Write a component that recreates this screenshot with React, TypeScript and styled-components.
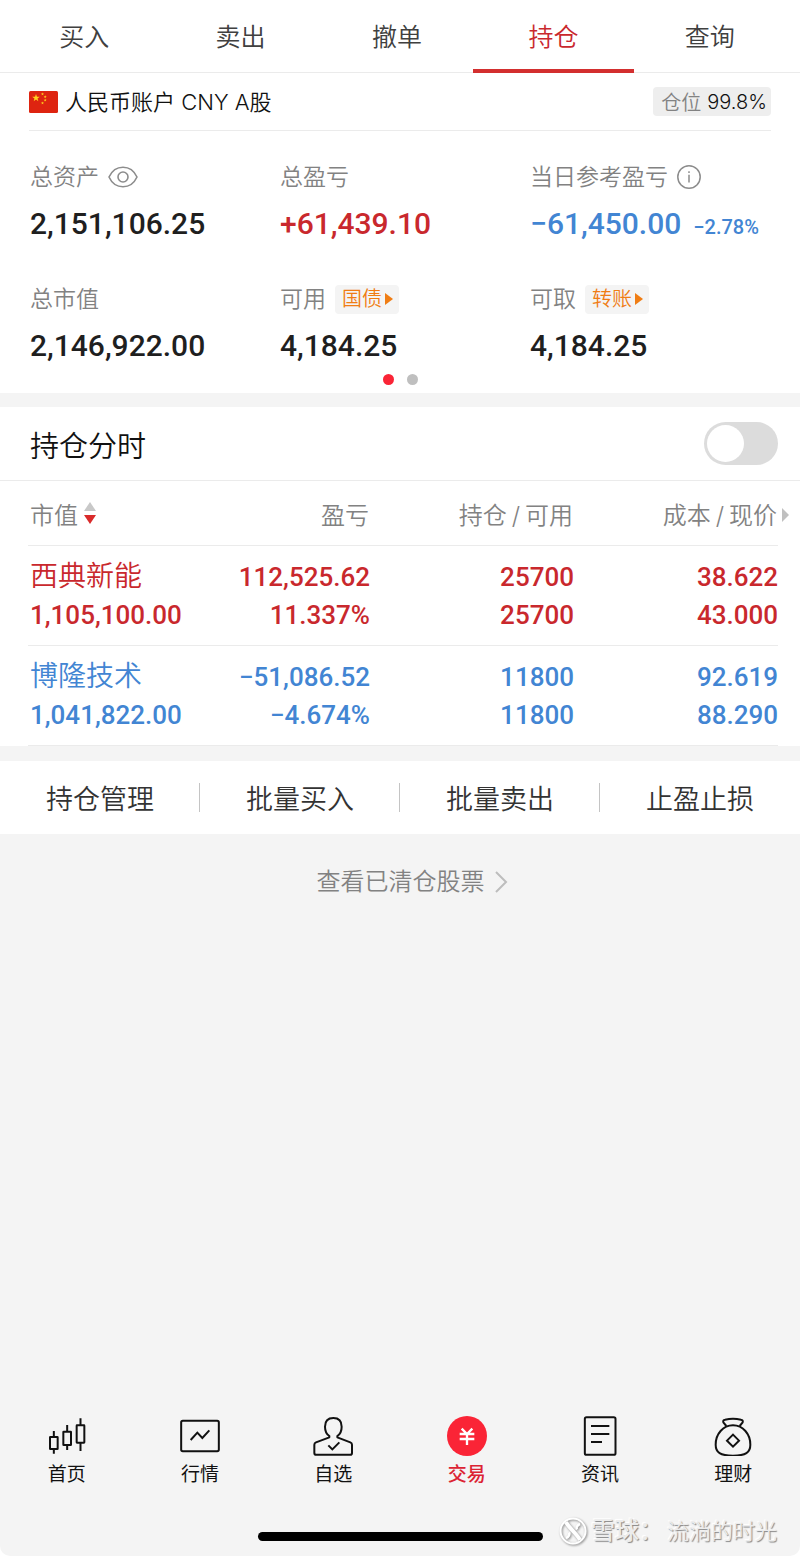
import React from "react";
import styled, { createGlobalStyle, css } from "styled-components";

const c = {
  red: "#c9282d",
  bar: "#d32f2f",
  blue: "#4285d3",
  orange: "#f07d14",
  ink: "#1f1f1f",
  text: "#404040",
  muted: "#828282",
  line: "#ebebeb",
  page: "#f4f4f4",
};

const GlobalStyle = createGlobalStyle`
  *, *::before, *::after { box-sizing: border-box; }
  body {
    margin: 0;
    background: #fff;
    color: ${c.ink};
    font-family: Inter, "Noto Sans CJK SC", sans-serif;
    font-weight: 350;
  }
  button {
    border: 0;
    padding: 0;
    background: none;
    color: inherit;
    font: inherit;
    cursor: pointer;
  }
  a { color: inherit; text-decoration: none; }
`;

type Tone = "ink" | "red" | "blue";

const Screen = styled.div`
  display: flex;
  flex-direction: column;
  min-height: 100vh;
  background: ${c.page};
  border-radius: 0 0 10px 10px;
`;

const Tabs = styled.nav`
  display: flex;
  height: 73px;
  padding: 0 12px 0 6px;
  background: #fff;
  border-bottom: 1px solid ${c.line};
`;

const Tab = styled.button<{ $active?: boolean }>`
  position: relative;
  flex: 1;
  padding-top: 2px;
  font-size: 25px;
  line-height: 70px;
  color: ${(p) => (p.$active ? c.red : c.text)};
  ${(p) =>
    p.$active &&
    css`
      &::after {
        content: "";
        position: absolute;
        left: -2px;
        right: -2px;
        bottom: -1px;
        height: 4px;
        background: ${c.bar};
      }
    `}
`;

const Account = styled.section`
  padding: 0 29px;
  background: #fff;
`;

const AccountRow = styled.div`
  display: flex;
  align-items: center;
  justify-content: space-between;
  height: 58px;
  border-bottom: 1px solid ${c.line};
`;

const AccountName = styled.div`
  display: flex;
  align-items: center;
  gap: 7px;
  font-size: 22px;
  line-height: 30px;
  color: #111;
`;

const Position = styled.div`
  display: flex;
  align-items: center;
  gap: 6px;
  height: 29px;
  padding: 0 4px 0 8px;
  border-radius: 4px;
  background: #eeeeee;
  font-size: 20px;
  color: ${c.muted};
`;

const PositionValue = styled.span`
  color: #111;
`;

const Summary = styled.section`
  padding: 31px 20px 8px 30px;
  background: #fff;
`;

const Figures = styled.div`
  display: grid;
  grid-template-columns: repeat(3, 1fr);
  row-gap: 42px;
`;

const Figure = styled.div`
  display: flex;
  flex-direction: column;
  gap: 14px;
`;

const Label = styled.div`
  display: flex;
  align-items: center;
  gap: 9px;
  height: 30px;
  font-size: 23px;
  line-height: 30px;
  white-space: nowrap;
  color: ${c.muted};
`;

const Value = styled.div<{ $tone?: Tone }>`
  display: flex;
  align-items: baseline;
  gap: 12px;
  height: 36px;
  font: 500 30px/36px Roboto, "Noto Sans CJK SC", sans-serif;
  white-space: nowrap;
  color: ${(p) => c[p.$tone ?? "ink"]};
`;

const Rate = styled.span`
  font-size: 20px;
  line-height: 24px;
`;

const Tag = styled.button`
  display: flex;
  align-items: center;
  gap: 3px;
  height: 29px;
  padding: 0 6px 0 7px;
  border-radius: 4px;
  background: ${c.page};
  font-size: 20px;
  color: ${c.orange};
`;

const Pager = styled.div`
  display: flex;
  justify-content: center;
  gap: 13px;
  margin: 10px 10px 0 0;
`;

const Dot = styled.button<{ $on?: boolean }>`
  width: 11px;
  height: 11px;
  border-radius: 50%;
  background: ${(p) => (p.$on ? "#fa2436" : "#bfbfbf")};
`;

const Holdings = styled.section`
  margin-top: 14px;
  background: #fff;
`;

const HoldingsHead = styled.label`
  display: flex;
  align-items: center;
  justify-content: space-between;
  height: 74px;
  padding: 0 22px 0 30px;
  border-bottom: 1px solid ${c.line};
  font-size: 29px;
  color: #111;
`;

const Toggle = styled.input`
  appearance: none;
  display: flex;
  align-items: center;
  width: 74px;
  height: 43px;
  margin: 0;
  padding: 3px;
  border-radius: 22px;
  background: #dcdcdc;
  cursor: pointer;
  &::before {
    content: "";
    width: 37px;
    height: 37px;
    border-radius: 50%;
    background: #fff;
  }
  &:checked {
    justify-content: flex-end;
    background: ${c.red};
  }
`;

const TableWrap = styled.div`
  padding: 0 22px 0 28px;
`;

const Table = styled.table`
  width: 100%;
  table-layout: fixed;
  border-collapse: separate;
  border-spacing: 0;
`;

const Th = styled.th<{ $w: string }>`
  width: ${(p) => p.$w};
  height: 65px;
  padding: 0 1px 0 2px;
  border-bottom: 1px solid ${c.line};
  font-size: 24px;
  font-weight: 350;
  text-align: right;
  white-space: nowrap;
  color: ${c.muted};
  &:first-child { text-align: left; }
`;

const Slash = styled.span`
  padding: 0 5px;
`;

const SortButton = styled.button`
  display: flex;
  align-items: center;
  gap: 6px;
`;

const More = styled.span`
  position: relative;
  svg {
    position: absolute;
    left: calc(100% + 5px);
    top: 50%;
    transform: translateY(-50%);
  }
`;

const Td = styled.td<{ $tone: Tone }>`
  height: 100px;
  padding: 0 0 0 2px;
  border-bottom: 1px solid ${c.line};
  font: 500 26px/38px Roboto, "Noto Sans CJK SC", sans-serif;
  text-align: right;
  white-space: nowrap;
  color: ${(p) => c[p.$tone]};
  &:first-child { text-align: left; }
`;

const Line = styled.div`
  height: 38px;
`;

const StockName = styled.div`
  height: 38px;
  font-size: 28px;
  font-weight: 350;
`;

const Actions = styled.div`
  display: flex;
  height: 73px;
  margin-top: 15px;
  background: #fff;
`;

const Action = styled.button`
  display: flex;
  align-items: center;
  justify-content: center;
  flex: 1;
  position: relative;
  font-size: 27px;
  color: #333;
  & + &::before {
    content: "";
    position: absolute;
    left: -1px;
    width: 1px;
    height: 29px;
    background: #c4c4c4;
  }
`;

const Cleared = styled.a`
  display: flex;
  align-items: center;
  align-self: center;
  gap: 9px;
  margin: 30px 0 auto 24px;
  font-size: 24px;
  line-height: 36px;
  color: ${c.muted};
`;

const BottomNav = styled.nav`
  display: flex;
  padding-top: 24px;
`;

const NavItem = styled.a<{ $active?: boolean }>`
  display: flex;
  flex: 1;
  flex-direction: column;
  align-items: center;
  gap: 5px;
  font-size: 19px;
  line-height: 28px;
  font-weight: ${(p) => (p.$active ? 500 : 400)};
  color: ${(p) => (p.$active ? "#dc2333" : "#111")};
`;

const Footer = styled.footer`
  position: relative;
  display: flex;
  justify-content: center;
  padding: 43px 0 15px;
`;

const HomeBar = styled.div`
  width: 285px;
  height: 9px;
  border-radius: 5px;
  background: #000;
`;

const Watermark = styled.div`
  position: absolute;
  right: 23px;
  bottom: 8px;
  display: flex;
  align-items: center;
  gap: 4px;
  font-size: 22px;
  line-height: 34px;
  color: #ececec;
  text-shadow: 1px 1px 1px #858585, -1px -1px 1px #fff;
  white-space: nowrap;
  svg { filter: drop-shadow(1px 1px 1px #858585); }
`;

const Brand = styled.span`
  font-size: 24px;
  font-weight: 500;
`;

const starPoints = (cx: number, cy: number, r: number) =>
  Array.from({ length: 10 }, (_, i) => {
    const a = -Math.PI / 2 + (i * Math.PI) / 5;
    const k = i % 2 ? r * 0.4 : r;
    return `${(cx + k * Math.cos(a)).toFixed(2)},${(cy + k * Math.sin(a)).toFixed(2)}`;
  }).join(" ");

const Flag = () => (
  <svg width="29" height="22" viewBox="0 0 29 22" aria-hidden="true">
    <rect width="29" height="22" rx="1.5" fill="#de2410" />
    <g fill="#ffd21c">
      <polygon points={starPoints(7, 7, 4)} />
      <polygon points={starPoints(13.5, 3, 1.6)} />
      <polygon points={starPoints(16.2, 5.8, 1.6)} />
      <polygon points={starPoints(16.2, 9.2, 1.6)} />
      <polygon points={starPoints(13.5, 12, 1.6)} />
    </g>
  </svg>
);

const Eye = () => (
  <svg width="30" height="22" viewBox="0 0 30 22" fill="none" stroke="#8c8c8c" strokeWidth="1.6" aria-hidden="true">
    <path d="M1 11C4 4.500 9 1.200 15 1.200S26 4.500 29 11C26 17.500 21 20.800 15 20.800S4 17.500 1 11Z" />
    <circle cx="15" cy="11" r="5" />
  </svg>
);

const Info = () => (
  <svg width="24" height="24" viewBox="0 0 24 24" fill="none" stroke="#8c8c8c" strokeWidth="1.5" aria-hidden="true">
    <circle cx="12" cy="12" r="11.200" />
    <path d="M12 9.800V17.500M12 6.300V8" strokeWidth="1.5" />
  </svg>
);

const Triangle = ({ w, h, color }: { w: number; h: number; color: string }) => (
  <svg width={w} height={h} viewBox="0 0 8 14" preserveAspectRatio="none" fill={color} aria-hidden="true">
    <path d="M0 0L8 7L0 14Z" />
  </svg>
);

const SortArrows = () => (
  <svg width="12" height="24" viewBox="0 0 12 24" aria-hidden="true">
    <path d="M6 1L12 10H0Z" fill="#c8c8c8" />
    <path d="M0 14H12L6 23Z" fill="#d92b2b" />
  </svg>
);

const Chevron = () => (
  <svg width="14" height="24" viewBox="0 0 14 24" fill="none" stroke="#bdbdbd" strokeWidth="2" aria-hidden="true">
    <path d="M2 2L12 12L2 22" />
  </svg>
);

const Icon = ({ children }: { children: React.ReactNode }) => (
  <svg width="40" height="40" viewBox="0 0 120 120" fill="none" stroke="#111" strokeWidth="6" aria-hidden="true">
    {children}
  </svg>
);

const navItems = [
  {
    name: "首页",
    icon: (
      <Icon>
        <rect x="9" y="63" width="23" height="36" rx="1" />
        <rect x="49" y="47" width="23" height="40" rx="1" />
        <rect x="89" y="28" width="23" height="52" rx="1" />
        <path d="M20.500 45V63M20.500 99V113M60.500 27V47M60.500 87V102M100.500 7V28M100.500 80V105" />
      </Icon>
    ),
  },
  {
    name: "行情",
    icon: (
      <Icon>
        <rect x="3.500" y="14.500" width="113" height="91" rx="5" />
        <path d="M32 72L52 50L67 66L88 43" />
      </Icon>
    ),
  },
  {
    name: "自选",
    icon: (
      <Icon>
        <path d="M49 60C40 54 36 44 36 32C36 15 46 6 61 6S86 15 86 32C86 44 82 54 73 60V64L112 79Q117 81 117 86V111Q117 116.500 112 116.500H9Q4 116.500 4 111V86Q4 81 9 79L49 64Z" strokeLinejoin="round" />
        <path d="M46 88L58 100L79 79" />
      </Icon>
    ),
  },
  {
    name: "交易",
    active: true,
    icon: (
      <Icon>
        <circle cx="60" cy="60" r="60" fill="#fa2436" stroke="none" />
        <path d="M44 38L60 54L76 38M38 54H82M38 69H82M60 52V87" stroke="#fff" strokeWidth="7" />
      </Icon>
    ),
  },
  {
    name: "资讯",
    icon: (
      <Icon>
        <rect x="14.500" y="3.500" width="92" height="113" rx="5" />
        <path d="M33 30H88M33 54H88M33 78H66" />
      </Icon>
    ),
  },
  {
    name: "理财",
    icon: (
      <Icon>
        <path d="M40 30L31 19Q29 12 36 11Q60 6 84 11Q91 12 89 19L80 30" strokeLinejoin="round" />
        <path d="M60 28C30 28 8 54 8 86C8 110 22 119 60 119S112 110 112 86C112 54 90 28 60 28Z" />
        <path d="M60 56L78 74L60 92L42 74Z" />
      </Icon>
    ),
  },
];

const stocks: { name: string; value: string; profit: string; rate: string; held: string; usable: string; cost: string; price: string; tone: Tone }[] = [
  { name: "西典新能", value: "1,105,100.00", profit: "112,525.62", rate: "11.337%", held: "25700", usable: "25700", cost: "38.622", price: "43.000", tone: "red" },
  { name: "博隆技术", value: "1,041,822.00", profit: "−51,086.52", rate: "−4.674%", held: "11800", usable: "11800", cost: "92.619", price: "88.290", tone: "blue" },
];

const Pair = ({ tone, top, bottom }: { tone: Tone; top: string; bottom: string }) => (
  <Td $tone={tone}>
    <Line>{top}</Line>
    <Line>{bottom}</Line>
  </Td>
);

export default function App() {
  return (
    <Screen>
      <GlobalStyle />
      <Tabs>
        {["买入", "卖出", "撤单", "持仓", "查询"].map((t) => (
          <Tab key={t} $active={t === "持仓"}>{t}</Tab>
        ))}
      </Tabs>

      <Account>
        <AccountRow>
          <AccountName>
            <Flag />
            <span>人民币账户 CNY A股</span>
          </AccountName>
          <Position>
            仓位 <PositionValue>99.8%</PositionValue>
          </Position>
        </AccountRow>
      </Account>

      <Summary>
        <Figures>
          <Figure>
            <Label>总资产 <Eye /></Label>
            <Value>2,151,106.25</Value>
          </Figure>
          <Figure>
            <Label>总盈亏</Label>
            <Value $tone="red">+61,439.10</Value>
          </Figure>
          <Figure>
            <Label>当日参考盈亏 <Info /></Label>
            <Value $tone="blue">−61,450.00 <Rate>−2.78%</Rate></Value>
          </Figure>
          <Figure>
            <Label>总市值</Label>
            <Value>2,146,922.00</Value>
          </Figure>
          <Figure>
            <Label>可用 <Tag>国债<Triangle w={8} h={12} color={c.orange} /></Tag></Label>
            <Value>4,184.25</Value>
          </Figure>
          <Figure>
            <Label>可取 <Tag>转账<Triangle w={8} h={12} color={c.orange} /></Tag></Label>
            <Value>4,184.25</Value>
          </Figure>
        </Figures>
        <Pager>
          <Dot $on aria-label="1" />
          <Dot aria-label="2" />
        </Pager>
      </Summary>

      <Holdings>
        <HoldingsHead>
          持仓分时
          <Toggle type="checkbox" />
        </HoldingsHead>
        <TableWrap>
          <Table>
            <thead>
              <tr>
                <Th $w="21%"><SortButton>市值<SortArrows /></SortButton></Th>
                <Th $w="24.6%">盈亏</Th>
                <Th $w="27.2%">持仓<Slash>/</Slash>可用</Th>
                <Th $w="27.2%"><More>成本<Slash>/</Slash>现价<Triangle w={7} h={14} color="#c0c0c0" /></More></Th>
              </tr>
            </thead>
            <tbody>
              {stocks.map((s) => (
                <tr key={s.name}>
                  <Td $tone={s.tone}>
                    <StockName>{s.name}</StockName>
                    <Line>{s.value}</Line>
                  </Td>
                  <Pair tone={s.tone} top={s.profit} bottom={s.rate} />
                  <Pair tone={s.tone} top={s.held} bottom={s.usable} />
                  <Pair tone={s.tone} top={s.cost} bottom={s.price} />
                </tr>
              ))}
            </tbody>
          </Table>
        </TableWrap>
      </Holdings>

      <Actions>
        {["持仓管理", "批量买入", "批量卖出", "止盈止损"].map((a) => (
          <Action key={a}>{a}</Action>
        ))}
      </Actions>

      <Cleared href="#cleared">查看已清仓股票 <Chevron /></Cleared>

      <BottomNav>
        {navItems.map((n) => (
          <NavItem key={n.name} href={`#${n.name}`} $active={n.active}>
            {n.icon}
            {n.name}
          </NavItem>
        ))}
      </BottomNav>
      <Footer>
        <HomeBar />
        <Watermark>
          <svg width="28" height="28" viewBox="0 0 28 28" fill="none" stroke="#fff" strokeWidth="2" aria-hidden="true">
            <circle cx="14" cy="14" r="12.500" />
            <path d="M7 5C9 10 19 18 21 23" strokeWidth="4" />
            <path d="M21 7C18 8 17 11 18 12.500M7 21C10 20 11 17 10 15.500" strokeWidth="2.500" />
          </svg>
          <Brand>雪球：</Brand>
          <span>流淌的时光</span>
        </Watermark>
      </Footer>
    </Screen>
  );
}
